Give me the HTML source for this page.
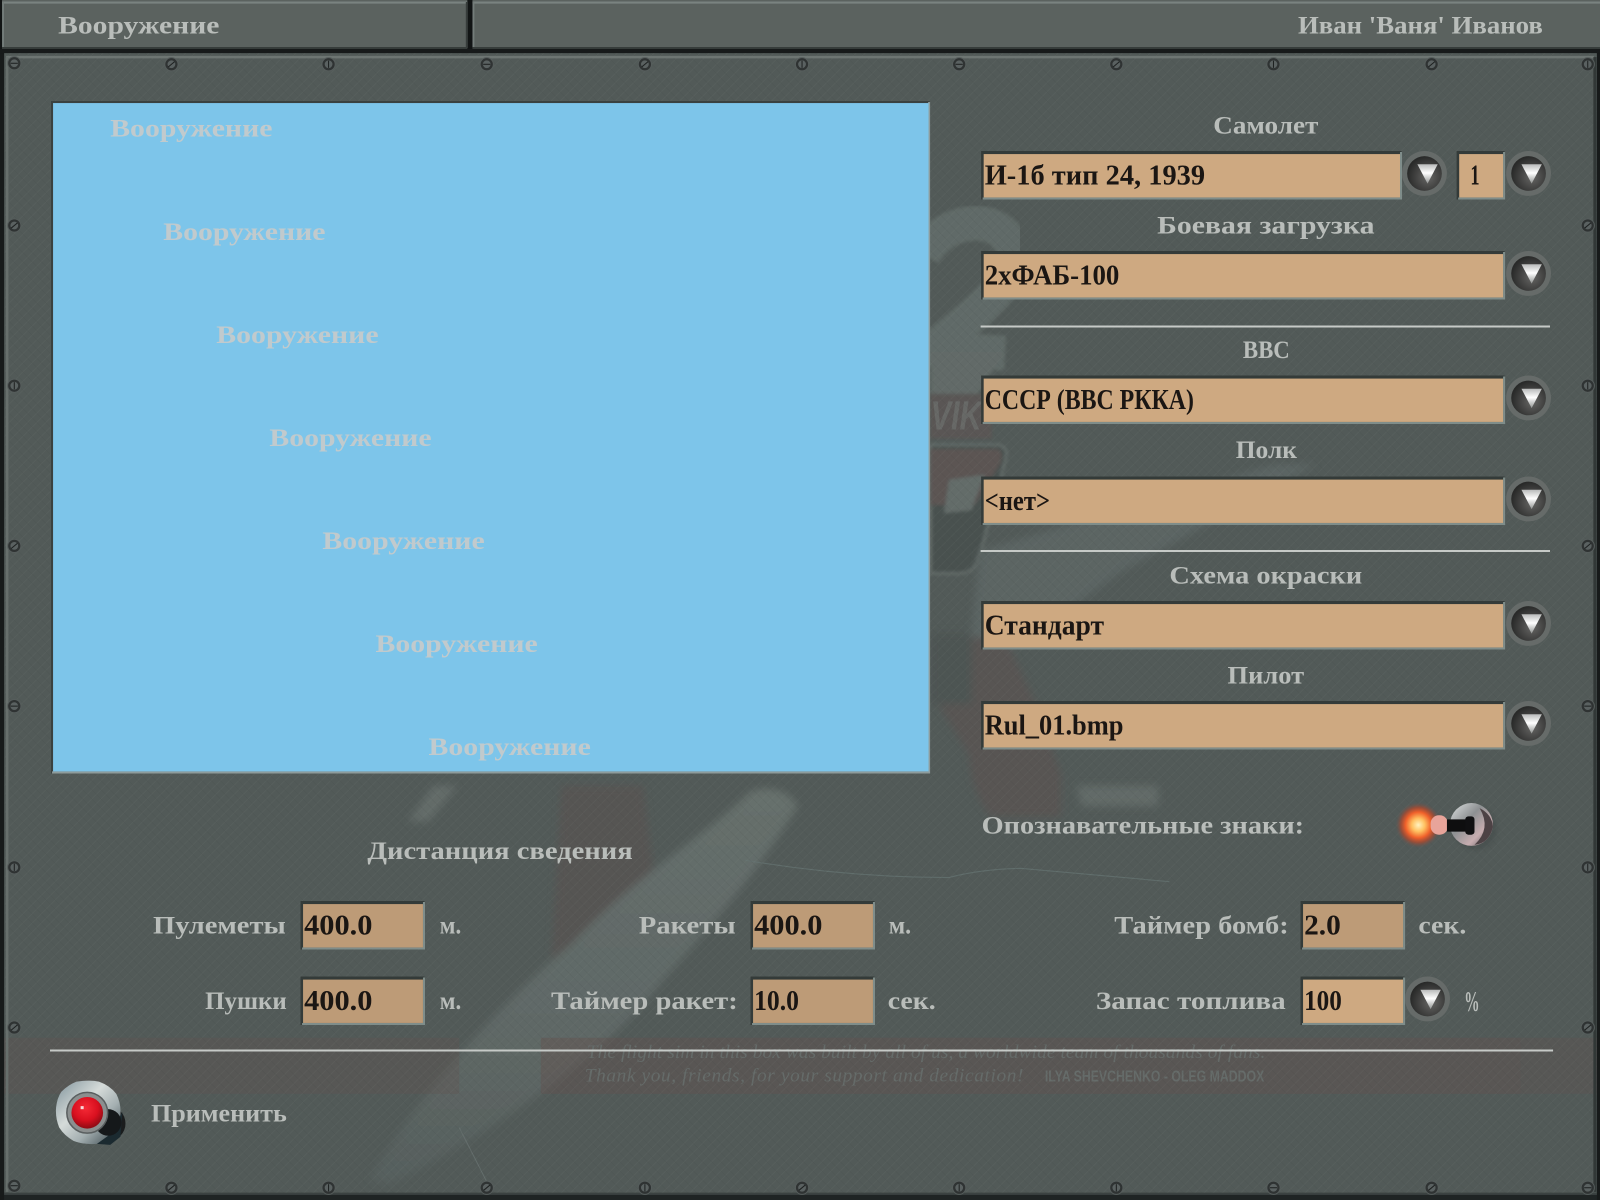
<!DOCTYPE html>
<html lang="ru"><head><meta charset="utf-8"><title>Вооружение</title>
<style>
html,body{margin:0;padding:0;background:#101313;width:1600px;height:1200px;overflow:hidden}
svg{display:block}
text{font-family:"Liberation Serif","Noto Serif CJK SC",serif;font-weight:700}
.l{fill:#b9bdba;font-size:25px}
.b{fill:#c1cacd;font-size:25px}
.f{fill:#1b1613;font-size:28px}
</style></head><body>
<svg xmlns="http://www.w3.org/2000/svg" width="1600" height="1200" viewBox="0 0 1600 1200">
<defs>
<pattern id="hatch" width="9" height="9" patternUnits="userSpaceOnUse">
<path d="M0 9L9 0M-2 2L2 -2M7 11L11 7" stroke="#8d9693" stroke-width=".6" opacity=".1"/>
<path d="M0 0L9 9M-2 7L2 11M7 -2L11 2" stroke="#2f3634" stroke-width=".6" opacity=".12"/>
</pattern>
<filter id="soft" x="-5%" y="-5%" width="110%" height="110%"><feGaussianBlur stdDeviation="4"/></filter>
<filter id="soft2" x="-5%" y="-5%" width="110%" height="110%"><feGaussianBlur stdDeviation="1.5"/></filter>
<filter id="blur8" x="-50%" y="-50%" width="200%" height="200%"><feGaussianBlur stdDeviation="2"/></filter>
<linearGradient id="wing" x1="0" y1="0" x2="0" y2="1"><stop offset="0" stop-color="#666f6c"/><stop offset=".6" stop-color="#5f6866"/><stop offset="1" stop-color="#565f5d"/></linearGradient>
<linearGradient id="tri" x1="0" y1="0" x2="0" y2="1"><stop offset="0" stop-color="#b9bbba"/><stop offset=".45" stop-color="#fff"/><stop offset="1" stop-color="#8f9290"/></linearGradient>
<radialGradient id="knob" cx=".6" cy=".6" r=".6"><stop offset="0" stop-color="#666664"/><stop offset=".55" stop-color="#444443"/><stop offset="1" stop-color="#292a29"/></radialGradient>
<radialGradient id="glow"><stop offset="0" stop-color="#fff3c0"/><stop offset=".28" stop-color="#ffc060"/><stop offset=".55" stop-color="#f0602a"/><stop offset=".75" stop-color="#a94a30" stop-opacity=".8"/><stop offset="1" stop-color="#56595a" stop-opacity="0"/></radialGradient>
<linearGradient id="chrome" x1="0" y1="0" x2="1" y2="1"><stop offset="0" stop-color="#dfe3e3"/><stop offset=".4" stop-color="#8d9092"/><stop offset=".7" stop-color="#c7adb0"/><stop offset="1" stop-color="#474a4d"/></linearGradient>
<linearGradient id="metal" x1="0" y1="0" x2="1" y2="1"><stop offset="0" stop-color="#7f929a"/><stop offset=".4" stop-color="#d5dbd9"/><stop offset=".65" stop-color="#a4afb1"/><stop offset="1" stop-color="#2c3a40"/></linearGradient>
<radialGradient id="red" cx=".45" cy=".35" r=".65"><stop offset="0" stop-color="#f52a36"/><stop offset=".6" stop-color="#d9101f"/><stop offset="1" stop-color="#8e0b14"/></radialGradient>
<g id="btn">
<circle r="22" fill="#666b69"/>
<circle r="17" fill="url(#knob)"/>
<path d="M-7 -9L13 -9L3 10Z" fill="url(#tri)"/>
</g>
<g id="s1"><circle r="6.500" fill="#2f3333" stroke="#565d5c" stroke-width="1"/><circle r="3.800" fill="#5a6161"/><path d="M-3 2.500L3 -2.500" stroke="#1d2020" stroke-width="1"/></g>
<g id="s2"><circle r="6.500" fill="#2f3333" stroke="#565d5c" stroke-width="1"/><circle r="3.800" fill="#5a6161"/><path d="M-3.500 0L3.500 0" stroke="#1d2020" stroke-width="1"/></g>
<g id="s3"><circle r="6.500" fill="#2f3333" stroke="#565d5c" stroke-width="1"/><circle r="3.800" fill="#5a6161"/><path d="M0 -3.500L0 3.500" stroke="#1d2020" stroke-width="1"/></g>
</defs>

<g transform="scale(1.020408)">
<rect width="1568" height="1176" fill="#121515"/>
<rect x="2" y="0" width="456" height="47" fill="#5b625f"/>
<rect x="463" y="0" width="1105" height="47" fill="#5b625f"/>
<path d="M2 2.500H458M463 2.500H1568" stroke="#7a8380" stroke-width="2"/>
<path d="M3 2V47M464 2V47" stroke="#747d7a" stroke-width="1.800"/>
<path d="M2 47H458M463 47H1568M457.500 2V47" stroke="#373d3b" stroke-width="2"/>

<rect x="4" y="52" width="1561" height="1119" fill="#525a58"/>
<g filter="url(#soft2)">
<path d="M905 250C925 212 985 205 995 250C990 285 950 310 915 342L985 346" fill="none" stroke="#616a67" stroke-width="34"/>
<path d="M912 345L985 345L958 386L912 386Z" fill="#626b68"/>
<rect x="912" y="386" width="60" height="44" fill="#5a5654"/>
<path d="M912 436H975Q990 436 985 452L960 545Q955 562 940 562H912Z" fill="#4a5150" stroke="#626b68" stroke-width="3"/>
<path d="M912 440H975Q985 440 980 455L955 495H912Z" fill="#5b5452"/>
<path d="M930 470L965 465L952 500L925 503Z" fill="#636c69"/>
</g>
<g filter="url(#soft)">
<path d="M960 540L1250 455L1290 455L1100 560L985 640L950 640Z" fill="#5c6563"/>
<path d="M912 625H985L1015 690L1040 760L1040 800L970 800Q950 770 950 740L920 690H912Z" fill="#585452"/>
<rect x="912" y="620" width="40" height="70" fill="#4e5453"/>
<path d="M1055 770H1135V790H1060Z" fill="#626a68"/>
<path d="M550 770L630 770L640 850L590 940L540 950Z" fill="#575553"/>
<path d="M400 805L425 770L448 770L420 805Z" fill="#636c69"/>
<path d="M735 776C750 770 772 772 782 790C745 850 700 905 650 960C590 1040 480 1110 382 1161L362 1156C400 1090 470 1000 560 925C620 860 690 820 735 776Z" fill="url(#wing)"/>
</g>
<path d="M730 843Q830 860 930 860Q960 852 1000 851L1146 864" fill="none" stroke="#647270" stroke-width="1.100" opacity=".8"/>
<path d="M450 1105L478 1160" fill="none" stroke="#687270" stroke-width="1" opacity=".8"/>
<rect x="0" y="1017" width="450" height="55" fill="#64524f" opacity=".3"/>
<rect x="530" y="1017" width="960" height="55" fill="#64524f" opacity=".42"/>
<rect x="1490" y="1017" width="78" height="55" fill="#64524f" opacity=".3"/>
<text x="912" y="421" font-size="40" font-style="italic" fill="#747a78" opacity=".5" textLength="50" lengthAdjust="spacingAndGlyphs" style="font-family:'Liberation Sans',sans-serif">VIK</text>
<text x="575" y="1037" font-size="19" font-style="italic" fill="#656b69" textLength="665" lengthAdjust="spacing" style="font-weight:400">The flight sim in this box was built by all of us, a worldwide team of thousands of fans.</text>
<text x="573" y="1060" font-size="19" font-style="italic" fill="#656b69" textLength="430" lengthAdjust="spacing" style="font-weight:400">Thank you, friends, for your support and dedication!</text>
<text x="1024" y="1060" font-size="15" fill="#656b69" textLength="215" lengthAdjust="spacingAndGlyphs" style="font-family:'Liberation Sans',sans-serif">ILYA SHEVCHENKO - OLEG MADDOX</text>
<rect x="4" y="52" width="1561" height="1119" fill="url(#hatch)"/>
<path d="M6 56H1562" stroke="#6d7572" stroke-width="2.500"/>
<path d="M7 56V1168" stroke="#676f6c" stroke-width="2.500"/>
<path d="M1563 56V1168" stroke="#323837" stroke-width="3"/>
<rect x="0" y="1169" width="1568" height="7" fill="#1f2424"/>
<rect x="0" y="1169" width="1568" height="2" fill="#3b4241"/>
<rect x="0" y="48" width="1568" height="4" fill="#171a1a"/>
<rect x="0" y="52" width="4" height="1124" fill="#171a1a"/>
<rect x="1565" y="52" width="3" height="1124" fill="#171a1a"/>

<use href="#s2" x="14" y="62"/><use href="#s1" x="168" y="63"/><use href="#s3" x="322" y="63"/><use href="#s2" x="477" y="63"/><use href="#s1" x="632" y="63"/><use href="#s3" x="786" y="63"/><use href="#s2" x="940" y="63"/><use href="#s1" x="1094" y="63"/><use href="#s3" x="1248" y="63"/><use href="#s1" x="1403" y="63"/><use href="#s3" x="1556" y="63"/>
<use href="#s2" x="14" y="1162"/><use href="#s1" x="168" y="1164"/><use href="#s3" x="322" y="1164"/><use href="#s1" x="477" y="1164"/><use href="#s3" x="632" y="1164"/><use href="#s1" x="786" y="1164"/><use href="#s3" x="940" y="1164"/><use href="#s3" x="1094" y="1164"/><use href="#s2" x="1248" y="1164"/><use href="#s1" x="1403" y="1164"/><use href="#s2" x="1556" y="1164"/>
<use href="#s1" x="14" y="221"/><use href="#s3" x="14" y="378"/><use href="#s1" x="14" y="535"/><use href="#s2" x="14" y="692"/><use href="#s3" x="14" y="850"/><use href="#s1" x="14" y="1007"/>
<use href="#s1" x="1556" y="221"/><use href="#s3" x="1556" y="378"/><use href="#s1" x="1556" y="535"/><use href="#s2" x="1556" y="692"/><use href="#s3" x="1556" y="850"/><use href="#s1" x="1556" y="1007"/>

<rect x="50" y="99" width="861" height="659" fill="#3a4140"/>
<path d="M51 757H910.500V100" fill="none" stroke="#8e9c9c" stroke-width="2"/>
<rect x="52" y="101" width="858" height="655" fill="#7dc5ea"/>
<text class="b" x="108" y="134" textLength="159" lengthAdjust="spacingAndGlyphs">Вооружение</text>
<text class="b" x="160" y="235" textLength="159" lengthAdjust="spacingAndGlyphs">Вооружение</text>
<text class="b" x="212" y="336" textLength="159" lengthAdjust="spacingAndGlyphs">Вооружение</text>
<text class="b" x="264" y="437" textLength="159" lengthAdjust="spacingAndGlyphs">Вооружение</text>
<text class="b" x="316" y="538" textLength="159" lengthAdjust="spacingAndGlyphs">Вооружение</text>
<text class="b" x="368" y="639" textLength="159" lengthAdjust="spacingAndGlyphs">Вооружение</text>
<text class="b" x="420" y="740" textLength="159" lengthAdjust="spacingAndGlyphs">Вооружение</text>

<text class="l" x="57" y="33" textLength="158" lengthAdjust="spacingAndGlyphs">Вооружение</text>
<text class="l" x="1272" y="33" textLength="240" lengthAdjust="spacingAndGlyphs">Иван 'Ваня' Иванов</text>

<text class="l" x="1189" y="131" textLength="103" lengthAdjust="spacingAndGlyphs">Самолет</text>
<text class="l" x="1134" y="229" textLength="213" lengthAdjust="spacingAndGlyphs">Боевая загрузка</text>
<text class="l" x="1218" y="351" textLength="46" lengthAdjust="spacingAndGlyphs">ВВС</text>
<text class="l" x="1211" y="449" textLength="60" lengthAdjust="spacingAndGlyphs">Полк</text>
<text class="l" x="1146" y="572" textLength="189" lengthAdjust="spacingAndGlyphs">Схема окраски</text>
<text class="l" x="1203" y="670" textLength="75" lengthAdjust="spacingAndGlyphs">Пилот</text>
<path d="M961 320H1519M961 540H1519M49 1029.500H1522" stroke="#c6cac7" stroke-width="2"/>

<g fill="#343b39">
<rect x="961.500" y="148" width="412" height="47.500"/><rect x="1427.500" y="148" width="47" height="47.500"/>
<rect x="961.500" y="246" width="513" height="47.500"/><rect x="961.500" y="368" width="513" height="47.500"/>
<rect x="961.500" y="467" width="513" height="47.500"/><rect x="961.500" y="589" width="513" height="47.500"/>
<rect x="961.500" y="687" width="513" height="47.500"/>
<rect x="294.500" y="883" width="121.500" height="47.500"/><rect x="294.500" y="957" width="121.500" height="47.500"/>
<rect x="735.500" y="883" width="121.500" height="47.500"/><rect x="735.500" y="957" width="121.500" height="47.500"/>
<rect x="1274.500" y="883" width="102" height="47.500"/><rect x="1274.500" y="957" width="102" height="47.500"/>
</g>
<path d="M963 194.500H1373V149M1429 194.500H1474V149M963 292.500H1474V247M963 414.500H1474V369M963 513.500H1474V468M963 635.500H1474V590M963 733.500H1474V688M296 929.500H415.500V884M296 1003.500H415.500V958M737 929.500H856.500V884M737 1003.500H856.500V958M1276 929.500H1376V884M1276 1003.500H1376V958" fill="none" stroke="#7f8d8a" stroke-width="2"/>
<g fill="#cea981">
<rect x="964" y="151" width="408" height="42.500"/><rect x="1430" y="151" width="43" height="42.500"/>
<rect x="964" y="249" width="509" height="42.500"/><rect x="964" y="371" width="509" height="42.500"/>
<rect x="964" y="470" width="509" height="42.500"/><rect x="964" y="592" width="509" height="42.500"/>
<rect x="964" y="690" width="509" height="42.500"/>
<rect x="1277" y="960" width="98" height="42.500"/>
</g>
<g fill="#bd9b77">
<rect x="297" y="886" width="117.500" height="42.500"/><rect x="297" y="960" width="117.500" height="42.500"/>
<rect x="738" y="886" width="117.500" height="42.500"/><rect x="738" y="960" width="117.500" height="42.500"/>
<rect x="1277" y="886" width="98" height="42.500"/>
</g>

<text class="f" x="965" y="181" textLength="216" lengthAdjust="spacingAndGlyphs">И-1б тип 24, 1939</text>
<text class="f" x="1441" y="181" textLength="9" lengthAdjust="spacingAndGlyphs">1</text>
<text class="f" x="965" y="279" textLength="132" lengthAdjust="spacingAndGlyphs">2хФАБ-100</text>
<text class="f" x="965" y="401" textLength="205" lengthAdjust="spacingAndGlyphs">СССР (ВВС РККА)</text>
<text class="f" x="965" y="500" textLength="64" lengthAdjust="spacingAndGlyphs">&lt;нет&gt;</text>
<text class="f" x="965" y="622" textLength="117" lengthAdjust="spacingAndGlyphs">Стандарт</text>
<text class="f" x="965" y="720" textLength="136" lengthAdjust="spacingAndGlyphs">Rul_01.bmp</text>
<text class="f" x="298" y="916" textLength="67" lengthAdjust="spacingAndGlyphs">400.0</text>
<text class="f" x="298" y="990" textLength="67" lengthAdjust="spacingAndGlyphs">400.0</text>
<text class="f" x="739" y="916" textLength="67" lengthAdjust="spacingAndGlyphs">400.0</text>
<text class="f" x="739" y="990" textLength="44" lengthAdjust="spacingAndGlyphs">10.0</text>
<text class="f" x="1278" y="916" textLength="36" lengthAdjust="spacingAndGlyphs">2.0</text>
<text class="f" x="1278" y="990" textLength="37" lengthAdjust="spacingAndGlyphs">100</text>

<use href="#btn" x="1396" y="170"/><use href="#btn" x="1498" y="170"/><use href="#btn" x="1498" y="268"/><use href="#btn" x="1498" y="390"/><use href="#btn" x="1498" y="489"/><use href="#btn" x="1498" y="611"/><use href="#btn" x="1498" y="709"/><use href="#btn" x="1399" y="979"/>

<text class="l" x="962" y="817" textLength="316" lengthAdjust="spacingAndGlyphs">Опознавательные знаки:</text>
<text class="l" x="360" y="842" textLength="260" lengthAdjust="spacingAndGlyphs">Дистанция сведения</text>
<text class="l" x="150" y="915" textLength="130" lengthAdjust="spacingAndGlyphs">Пулеметы</text>
<text class="l" x="201" y="989" textLength="80" lengthAdjust="spacingAndGlyphs">Пушки</text>
<text class="l" x="431" y="915" textLength="21" lengthAdjust="spacingAndGlyphs">м.</text>
<text class="l" x="431" y="989" textLength="21" lengthAdjust="spacingAndGlyphs">м.</text>
<text class="l" x="626" y="915" textLength="95" lengthAdjust="spacingAndGlyphs">Ракеты</text>
<text class="l" x="540" y="989" textLength="183" lengthAdjust="spacingAndGlyphs">Таймер ракет:</text>
<text class="l" x="871" y="915" textLength="22" lengthAdjust="spacingAndGlyphs">м.</text>
<text class="l" x="870" y="989" textLength="47" lengthAdjust="spacingAndGlyphs">сек.</text>
<text class="l" x="1092" y="915" textLength="171" lengthAdjust="spacingAndGlyphs">Таймер бомб:</text>
<text class="l" x="1390" y="915" textLength="47" lengthAdjust="spacingAndGlyphs">сек.</text>
<text class="l" x="1074" y="989" textLength="186" lengthAdjust="spacingAndGlyphs">Запас топлива</text>
<text class="l" x="1435" y="991" textLength="15" lengthAdjust="spacingAndGlyphs" style="font-size:28px">%</text>
<text class="l" x="148" y="1099" textLength="133" lengthAdjust="spacingAndGlyphs">Применить</text>

<circle cx="1390" cy="808.500" r="23" fill="url(#glow)"/>
<circle cx="1446" cy="812" r="21" fill="#3e4544" opacity=".4" filter="url(#blur8)"/>
<circle cx="1442" cy="808" r="21" fill="url(#chrome)"/>
<path d="M1450 792Q1462 812 1445 828Q1460 826 1463 810Q1462 798 1450 792Z" fill="#4d4245"/>
<rect x="1402" y="799" width="17" height="19" rx="8" fill="#e8a49a"/>
<rect x="1418" y="803" width="24" height="12" fill="#0e0e0f"/>
<rect x="1436" y="800" width="9" height="18" rx="3" fill="#101012"/>

<circle cx="106" cy="1101" r="17" fill="#17191a" opacity=".95"/>
<path d="M75 1060Q88 1058 97 1060Q108 1064 114 1072Q119 1082 118 1093Q117 1102 113 1108Q105 1118 95 1121Q82 1122 72 1118Q63 1113 58 1105Q54 1095 55 1085Q56 1076 60 1070Q67 1063 75 1060Z" fill="url(#metal)"/>
<path d="M95 1121L113 1108L118 1093L120 1090L118 1114L108 1122Z" fill="#1b2a30"/>
<circle cx="106" cy="1100" r="13" fill="#15181a"/>
<circle cx="85.500" cy="1090.500" r="20" fill="#8b8f8f"/>
<circle cx="85.500" cy="1090.500" r="20" fill="none" stroke="#5a5f60" stroke-width="1.500"/>
<circle cx="85.500" cy="1090.500" r="15.500" fill="url(#red)"/>
<rect x="79" y="1084" width="3" height="3" fill="#f7d9d9"/>
</g>
</svg>
</body></html>
